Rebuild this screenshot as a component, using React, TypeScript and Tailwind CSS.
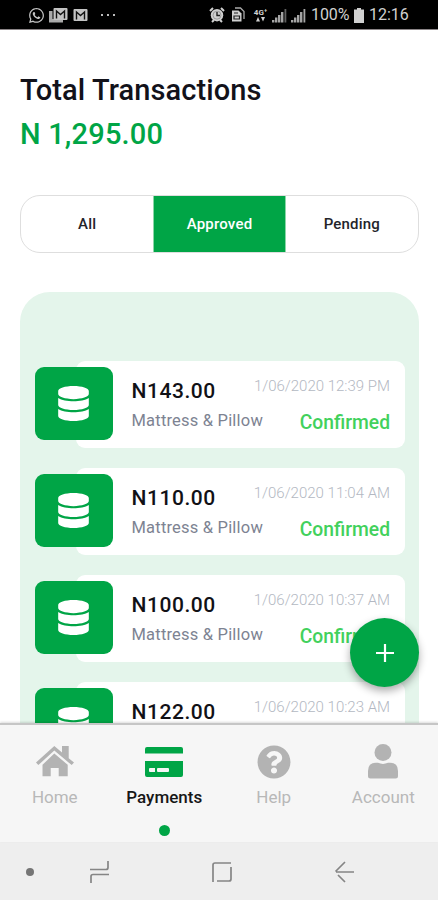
import React from "react";
import { FaDatabase, FaQuestionCircle, FaWhatsapp } from "react-icons/fa";

const transactions = [
  { amount: "N143.00", time: "1/06/2020 12:39 PM" },
  { amount: "N110.00", time: "1/06/2020 11:04 AM" },
  { amount: "N100.00", time: "1/06/2020 10:37 AM" },
  { amount: "N122.00", time: "1/06/2020 10:23 AM" },
];

function MailIcon({ stacked = false }: { stacked?: boolean }) {
  return (
    <svg width={stacked ? 19 : 15} height="16" viewBox={stacked ? "0 0 19 16" : "0 0 15 16"}>
      {stacked && <path d="M1 4v10.5h13M2.5 4v9H14" fill="none" stroke="#aaa" strokeWidth="2" />}
      <g transform={stacked ? "translate(4 0)" : "translate(0 1)"}>
        <rect x="0.5" y="1" width="14" height="12" rx="1" fill="#c4c4c4" />
        <path d="M3.5 11.5V4l4 3.5 4-3.5v7.5" fill="none" stroke="#111" strokeWidth="1.4" />
      </g>
    </svg>
  );
}

function AlarmIcon() {
  return (
    <svg width="16" height="16" viewBox="0 0 16 16">
      <path d="M1 4 4 1M15 4l-3-3M3 15l2-2M13 15l-2-2" stroke="#d0d0d0" strokeWidth="2" />
      <circle cx="8" cy="8.2" r="6.2" fill="#d0d0d0" />
      <path d="M8 5v3.5h3" fill="none" stroke="#222" strokeWidth="1.4" />
      <circle cx="8" cy="8.2" r="4" fill="none" stroke="#777" strokeWidth="0.6" />
    </svg>
  );
}

function SimIcon() {
  return (
    <svg width="14" height="16" viewBox="0 0 14 16" fill="none">
      <path d="M4 1h5.5L13 4.5V12" stroke="#aaa" strokeWidth="1.3" />
      <path d="M1 3.5h6.5l3 3V14.500H1z" fill="#d0d0d0" />
      <path d="M3 6h4M3 9h5.5v3H3z" stroke="#222" strokeWidth="1.2" />
    </svg>
  );
}

function Signal({ level }: { level: number }) {
  const bars = [
    { x: 0, y: 13 },
    { x: 3, y: 10.5 },
    { x: 6, y: 8 },
    { x: 9, y: 5 },
    { x: 12.5, y: 2 },
  ];
  return (
    <svg width="15" height="16" viewBox="0 0 15 16">
      {bars.map((bar, index) => (
        <rect key={bar.x} x={bar.x} y={bar.y} width={index === 4 ? 1.8 : 2.4} height={15.5 - bar.y} fill={index < level ? "#a5a5a5" : "#606060"} />
      ))}
    </svg>
  );
}

function StatusBar() {
  return (
    <header className="flex h-[30px] shrink-0 items-center border-b border-[#8b8587] bg-black pt-px pl-7 text-[#d0d0d0]">
      <FaWhatsapp className="size-[17px] text-[#c4c4c4]" />
      <div className="ml-1 flex items-center gap-[5px]">
        <MailIcon stacked />
        <MailIcon />
      </div>
      <div className="ml-[13px] flex gap-1">
        <i className="size-[2px] bg-[#bbb]" />
        <i className="size-[2px] bg-[#bbb]" />
        <i className="size-[2px] bg-[#bbb]" />
      </div>
      <div className="ml-auto flex items-center pr-[28px]">
        <AlarmIcon />
        <span className="ml-[6px]"><SimIcon /></span>
        <span className="ml-2 flex w-[15px] flex-col items-center">
          <b className="text-[8px] leading-[8px]">4G⁺</b>
          <svg width="9" height="5" viewBox="0 0 9 5" fill="#d0d0d0"><path d="M0 4.500h4L2 0zM5 0h4L7 4.500z" /></svg>
        </span>
        <span className="ml-[4px] flex gap-[4px]"><Signal level={4} /><Signal level={5} /></span>
        <span className="ml-[5px] w-[38px] text-[16px] tracking-[-0.1px] whitespace-nowrap">100%</span>
        <svg className="ml-[5px]" width="10" height="15" viewBox="0 0 10 15"><path d="M3 0h4v1.5h3V15H0V1.500h3z" fill="#d0d0d0" /></svg>
        <span className="ml-[5px] w-[41px] text-[16px] whitespace-nowrap">12:16</span>
      </div>
    </header>
  );
}

function Transaction({ amount, time }: { amount: string; time: string }) {
  return (
    <article className="flex h-[87px] shrink-0 items-center">
      <div className="z-10 mb-[2px] flex h-[73px] w-[78px] shrink-0 items-center justify-center rounded-[9px] bg-[#00a546] text-white">
        <FaDatabase className="h-[35px] w-[31px]" />
      </div>
      <div className="-ml-[37px] flex h-[87px] flex-1 flex-col rounded-[9px] bg-white pt-[15px] pr-[15px] pl-[56px]">
        <div className="flex h-8 items-center justify-between whitespace-nowrap">
          <strong className="text-[21px] font-medium tracking-[0.55px] text-[#111116]">{amount}</strong>
          <time className="pb-[11px] text-[15px] font-light text-[#b3b8c2]">{time}</time>
        </div>
        <div className="flex h-[30px] items-center justify-between whitespace-nowrap">
          <span className="pb-[3px] text-[16.5px] tracking-[0.2px] text-[#7d8392]">Mattress &amp; Pillow</span>
          <span className="text-[19.3px] font-medium text-[#42d15c]">Confirmed</span>
        </div>
      </div>
    </article>
  );
}

function HomeIcon() {
  return (
    <svg width="38" height="31" viewBox="0 0 38 31" fill="#b3b3b3">
      <path d="M18.3 0 26 6.600V0h6.700v12.300L38 16.600l-2.300 2.500L18.300 4.600 2.300 19.100 0 16.500z" />
      <path d="M18.3 7.500 31.700 18.800V30.300H22.700V22H14.700V30.300H6.500V18.800z" />
    </svg>
  );
}

function CardIcon() {
  return (
    <svg width="40" height="32" viewBox="0 0 40 32">
      <path d="M3 1h34q2 0 2 2v4.500H1V3q0-2 2-2zM1 15h38v14q0 2-2 2H3q-2 0-2-2z" fill="#00a546" />
      <path d="M6 22h5v4H6q-1 0-1-1v-2q0-1 1-1zM14 22h10q1 0 1 1v2q0 1-1 1H14q-1 0-1-1v-2q0-1 1-1z" fill="#f6f6f6" />
    </svg>
  );
}

function UserIcon() {
  return (
    <svg width="30" height="35" viewBox="0 0 30 35" fill="#b3b3b3">
      <circle cx="15" cy="8.5" r="8.5" />
      <path d="M8 18.800h2q5 2.200 10 0h2q8 0 8 8.200v5q0 2.500-2.500 2.500h-25Q0 34.500 0 32v-5q0-8.200 8-8.200z" />
    </svg>
  );
}

function NavItem({ label, icon, active = false }: { label: string; icon: React.ReactNode; active?: boolean }) {
  return (
    <button className={`flex flex-1 flex-col items-center text-[17px] ${active ? "font-medium text-[#171717]" : "text-[#b8b8b8]"}`}>
      <span className="flex h-[37px] items-center">{icon}</span>
      <span className="mt-[5px] leading-6">{label}</span>
      {active && <i className="mt-[16px] size-[11px] rounded-full bg-[#00a546]" />}
    </button>
  );
}

export default function App() {
  return (
    <div className="relative flex h-[900px] w-[438px] flex-col overflow-hidden bg-white font-[Roboto,sans-serif]">
      <StatusBar />
      <main className="flex h-[693px] shrink-0 flex-col overflow-hidden px-5">
        <h1 className="mt-[40px] text-[29px] leading-10 font-medium tracking-[0.1px] text-[#12121a]">Total Transactions</h1>
        <p className="mt-[4px] text-[29px] leading-10 font-medium tracking-[0.2px] text-[#00a546]">N 1,295.00</p>
        <div className="mt-[41px] grid h-[58px] w-[399px] shrink-0 grid-cols-3 overflow-hidden rounded-[20px] border border-[#dedede] text-[15px] font-medium tracking-[0.2px] text-[#24242a]">
          <button>All</button>
          <button className="border-x border-[#8bd6a8] bg-[#00a546] text-white">Approved</button>
          <button>Pending</button>
        </div>
        <section className="mt-[39px] flex w-[399px] flex-1 flex-col gap-5 overflow-hidden rounded-t-[30px] bg-[#e4f5eb] pt-[69px] pr-[14px] pl-[14.5px]">
          {transactions.map((item) => <Transaction key={item.amount} {...item} />)}
        </section>
      </main>
      <button aria-label="Add transaction" className="absolute top-[618px] left-[350px] z-20 flex size-[69px] items-center justify-center rounded-full bg-[#00a546] shadow-[0_4px_9px_#0005]">
        <svg width="18" height="18" viewBox="0 0 18 18"><path d="M9 0v18M0 9h18" stroke="white" strokeWidth="2.2" /></svg>
      </button>
      <nav className="z-10 flex h-[119px] shrink-0 border-t-2 border-[#c6c6c6] bg-[#f6f6f6] pt-[18px] shadow-[0_-1px_2px_#0002]">
        <NavItem label="Home" icon={<HomeIcon />} />
        <NavItem label="Payments" icon={<CardIcon />} active />
        <NavItem label="Help" icon={<FaQuestionCircle className="size-[34px] text-[#b3b3b3]" />} />
        <NavItem label="Account" icon={<UserIcon />} />
      </nav>
      <footer className="flex h-[58px] shrink-0 items-center bg-[#eeeeee] pt-[2px]">
        <i className="ml-[26px] size-2 rounded-full bg-[#757575]" />
        <svg className="ml-[55px]" width="21" height="22" viewBox="0 0 21 22" fill="none" stroke="#858585" strokeWidth="1.7"><path d="M1 8.500h16q2 0 2-2V0M20 13.500H4q-2 0-2 2V22" /></svg>
        <svg className="ml-[101px]" width="21" height="22" viewBox="0 0 21 22" fill="none" stroke="#858585" strokeWidth="1.7"><path d="M20 2H4Q2 2 2 4v17M20 6v12q0 2-2 2H6" /></svg>
        <svg className="ml-[102px]" width="21" height="22" viewBox="0 0 21 22" fill="none" stroke="#858585" strokeWidth="1.7"><path d="M20 11H2M11 1 1.500 10.500M4 14l7 7" /></svg>
      </footer>
    </div>
  );
}
